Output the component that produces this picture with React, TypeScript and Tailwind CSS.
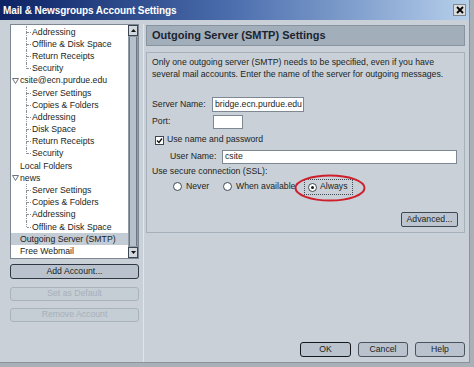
import React from "react";

type Item = { t: string; l: 0 | 1 | 2; open?: boolean; sel?: boolean; last?: boolean };

const items: Item[] = [
  { t: "Addressing", l: 2 },
  { t: "Offline & Disk Space", l: 2 },
  { t: "Return Receipts", l: 2 },
  { t: "Security", l: 2, last: true },
  { t: "csite@ecn.purdue.edu", l: 1, open: true },
  { t: "Server Settings", l: 2 },
  { t: "Copies & Folders", l: 2 },
  { t: "Addressing", l: 2 },
  { t: "Disk Space", l: 2 },
  { t: "Return Receipts", l: 2 },
  { t: "Security", l: 2, last: true },
  { t: "Local Folders", l: 1 },
  { t: "news", l: 1, open: true },
  { t: "Server Settings", l: 2 },
  { t: "Copies & Folders", l: 2 },
  { t: "Addressing", l: 2 },
  { t: "Offline & Disk Space", l: 2, last: true },
  { t: "Outgoing Server (SMTP)", l: 0, sel: true },
  { t: "Free Webmail", l: 0 },
];

function Triangle() {
  return (
    <svg width="7" height="6" viewBox="0 0 7 6" className="shrink-0">
      <polygon points="0.5,0.5 6.5,0.5 3.5,5.5" fill="none" stroke="#6a7480" strokeWidth="1" />
    </svg>
  );
}

function Row({ it }: { it: Item }) {
  return (
    <div className={`flex items-center h-[12.2px] whitespace-nowrap ${it.sel ? "bg-[#c3cbd4]" : ""}`}>
      {it.l === 2 ? (
        <>
          <div className="w-[15px] shrink-0" />
          <div className="w-[5px] h-full shrink-0 flex flex-col">
            <div className="flex-1 border-l border-dotted border-[#8a939c]" />
            <div className={`flex-1 ${it.last ? "" : "border-l border-dotted border-[#8a939c]"}`} />
          </div>
          <div className="w-[4px] -ml-[4px] shrink-0 border-t border-dotted border-[#8a939c]" />
          <span className="ml-[1px]">{it.t}</span>
        </>
      ) : it.open ? (
        <>
          <div className="w-[1px] shrink-0" />
          <Triangle />
          <span className="ml-[1px]">{it.t}</span>
        </>
      ) : (
        <>
          <div className="w-[9px] shrink-0" />
          <span>{it.t}</span>
        </>
      )}
    </div>
  );
}

function Radio({ on }: { on?: boolean }) {
  return (
    <div className="w-[9px] h-[9px] rounded-full bg-white border border-[#3e4852] flex items-center justify-center shrink-0">
      {on && <div className="w-[3px] h-[3px] rounded-full bg-[#1a1a1a]" />}
    </div>
  );
}

export default function App() {
  return (
    <div className="w-[474px] h-[367px] bg-[#a9b0b7] font-['Liberation_Sans',Arial,sans-serif] text-[8.7px] text-[#1b1f24] overflow-hidden">
      <div className="w-[470px] h-[363px] bg-[#c9d0d7] flex flex-col border-r border-b border-[#8a939c]">
        {/* Title bar */}
        <div className="h-[20px] shrink-0 flex items-center justify-between pl-[3px] pr-[3px] bg-gradient-to-r from-[#0e2264] via-[#4d6fae] to-[#b6cfeb]">
          <span className="text-white font-bold text-[10px] tracking-[-0.1px]">Mail &amp; Newsgroups Account Settings</span>
          <div className="w-[13px] h-[12px] bg-[#dcdcdc] border border-[#7c8690] flex items-center justify-center">
            <svg width="8" height="8" viewBox="0 0 8 8">
              <path d="M1 1 L7 7 M7 1 L1 7" stroke="#000" strokeWidth="1.8" />
            </svg>
          </div>
        </div>

        <div className="flex-1 flex pt-[4px]">
          {/* Left column */}
          <div className="ml-[10px] w-[129px] flex flex-col">
            <div className="h-[235px] bg-white border border-[#7c8792] flex">
              <div className="flex-1 pt-[1px] overflow-hidden">
                {items.map((it, i) => (
                  <Row key={i} it={it} />
                ))}
              </div>
              <div className="w-[10px] flex flex-col bg-[#8e9aa6]">
                <div className="h-[11px] bg-[#d2d8de] border border-[#3c4650] flex items-center justify-center">
                  <svg width="5" height="3" viewBox="0 0 5 3"><polygon points="0,3 5,3 2.5,0" fill="#111" /></svg>
                </div>
                <div className="flex-1 mx-[1px] my-[1px] bg-[#b6c0ca] border-x border-[#6d7884]" />
                <div className="h-[11px] bg-[#d2d8de] border border-[#3c4650] flex items-center justify-center">
                  <svg width="5" height="3" viewBox="0 0 5 3"><polygon points="0,0 5,0 2.5,3" fill="#111" /></svg>
                </div>
              </div>
            </div>
            <div className="mt-[5px] h-[15px] rounded-[3px] border border-[#2f3842] bg-[#bac3cd] flex items-center justify-center">Add Account...</div>
            <div className="mt-[8px] h-[14px] rounded-[3px] border border-[#aab3bc] bg-[#c5cdd5] flex items-center justify-center text-[#a7b0b9]">Set as Default</div>
            <div className="mt-[7px] h-[14px] rounded-[3px] border border-[#aab3bc] bg-[#c5cdd5] flex items-center justify-center text-[#a7b0b9]">Remove Account</div>
          </div>

          {/* Right column */}
          <div className="ml-[4px] w-[324px] flex flex-col border-l border-[#e1e6eb]">
            <div className="mt-[1px] mx-[2px] h-[21px] bg-[#a3aebb] border border-[#8693a1] flex items-center pl-[5px] text-[11px] font-bold text-[#1a2430]">
              Outgoing Server (SMTP) Settings
            </div>
            <div className="relative mt-[6px] mx-[2px] h-[181px] border border-[#a6b0ba] flex flex-col pl-[5px]">
              <div className="pt-[3px] leading-[12px]">
                <div>Only one outgoing server (SMTP) needs to be specified, even if you have</div>
                <div>several mail accounts. Enter the name of the server for outgoing messages.</div>
              </div>
              <div className="mt-[17px] h-[15px] flex items-center">
                <span className="w-[60px] shrink-0">Server Name:</span>
                <div className="w-[92px] h-[15px] bg-white border border-[#7d8893] flex items-center pl-[2px] overflow-hidden whitespace-nowrap">bridge.ecn.purdue.edu</div>
              </div>
              <div className="mt-[3px] h-[14px] flex items-center">
                <span className="w-[61px] shrink-0">Port:</span>
                <div className="w-[30px] h-[14px] bg-white border border-[#7d8893]" />
              </div>
              <div className="mt-[5px] h-[12px] flex items-center">
                <div className="ml-[3px] w-[9px] h-[9px] bg-white border border-[#3e4852] flex items-center justify-center">
                  <svg width="7" height="7" viewBox="0 0 7 7"><path d="M1 3.5 L3 5.5 L6 1.5" fill="none" stroke="#111" strokeWidth="1.3" /></svg>
                </div>
                <span className="ml-[3px]">Use name and password</span>
              </div>
              <div className="mt-[4px] h-[14px] flex items-center">
                <span className="ml-[18px] w-[52px] shrink-0">User Name:</span>
                <div className="w-[235px] h-[14px] bg-white border border-[#7d8893] flex items-center pl-[2px]">csite</div>
              </div>
              <div className="mt-[2px] h-[12px] flex items-center">Use secure connection (SSL):</div>
              <div className="mt-[1px] h-[16px] flex items-center">
                <div className="ml-[21px] w-[50px] flex items-center">
                  <Radio />
                  <span className="ml-[4px]">Never</span>
                </div>
                <div className="w-[81px] flex items-center">
                  <Radio />
                  <span className="ml-[4px]">When available</span>
                </div>
                <div className="w-[49px] h-[16px] border border-dotted border-[#444c55] flex items-center pl-[3px]">
                  <Radio on />
                  <span className="ml-[3px]">Always</span>
                </div>
              </div>
              <div className="mt-[17px] self-end mr-[6px] w-[57px] h-[15px] rounded-[2px] border border-[#3e4852] bg-[#bcc5cf] flex items-center justify-center">Advanced...</div>
              <svg className="absolute left-[147px] top-[121px]" width="72" height="28" viewBox="0 0 72 28">
                <ellipse cx="36" cy="14" rx="34.5" ry="12.5" fill="none" stroke="#cf1f2b" strokeWidth="2" />
              </svg>
            </div>
            <div className="mt-auto mb-[5px] flex justify-end gap-[7px] pr-[2px]">
              <div className="w-[51px] h-[15px] rounded-[3px] border-[1.5px] border-[#15191e] bg-[#bac3cd] flex items-center justify-center">OK</div>
              <div className="w-[50px] h-[15px] rounded-[3px] border border-[#4a535d] bg-[#bac3cd] flex items-center justify-center">Cancel</div>
              <div className="w-[50px] h-[15px] rounded-[3px] border border-[#4a535d] bg-[#bac3cd] flex items-center justify-center">Help</div>
            </div>
          </div>
        </div>
      </div>
    </div>
  );
}
